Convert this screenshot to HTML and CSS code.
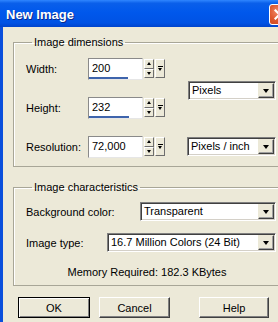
FILE: index.html
```html
<!DOCTYPE html>
<html lang="en">
<head>
    <meta charset="UTF-8">
    <title>New Image</title>
    <link rel="stylesheet" href="styles.css">
</head>
<body>
<div class="window">
  <div class="titlebar">
    <span class="title">New Image</span>
    <span class="close">
      <svg width="11" height="11" viewBox="0 0 11 11"><path d="M1.5 1.5 L9.5 9.5 M9.5 1.5 L1.5 9.5" stroke="#fff" stroke-width="2.2" stroke-linecap="square"/></svg>
    </span>
  </div>
  <div class="client">
    <fieldset class="group dims">
      <legend>Image dimensions</legend>
      <div class="dim-grid">
        <span class="lbl">Width:</span>
        <div class="spin">
          <div class="field"><span>200</span><i class="bar" style="width:39px"></i></div>
          <div class="spin-btns"><span class="sb"><b class="up"></b></span><span class="sb"><b class="down"></b></span></div>
          <div class="jump"><i class="line"></i><b class="down"></b></div>
        </div>
        <div class="select units">
          <span class="val">Pixels</span><span class="arrow"><b class="down"></b></span>
        </div>

        <span class="lbl">Height:</span>
        <div class="spin">
          <div class="field"><span>232</span><i class="bar" style="width:40px"></i></div>
          <div class="spin-btns"><span class="sb"><b class="up"></b></span><span class="sb"><b class="down"></b></span></div>
          <div class="jump"><i class="line"></i><b class="down"></b></div>
        </div>

        <span class="lbl">Resolution:</span>
        <div class="spin">
          <div class="field"><span>72,000</span></div>
          <div class="spin-btns"><span class="sb"><b class="up"></b></span><span class="sb"><b class="down"></b></span></div>
          <div class="jump"><i class="line"></i><b class="down"></b></div>
        </div>
        <div class="select res-units">
          <span class="val">Pixels / inch</span><span class="arrow"><b class="down"></b></span>
        </div>
      </div>
    </fieldset>

    <fieldset class="group chars">
      <legend>Image characteristics</legend>
      <div class="row">
        <span class="lbl">Background color:</span>
        <div class="select bg"><span class="val">Transparent</span><span class="arrow"><b class="down"></b></span></div>
      </div>
      <div class="row">
        <span class="lbl">Image type:</span>
        <div class="select type"><span class="val">16.7 Million Colors (24 Bit)</span><span class="arrow"><b class="down"></b></span></div>
      </div>
      <p class="memory">Memory Required: 182.3 KBytes</p>
    </fieldset>

    <div class="buttons">
      <button class="btn default">OK</button>
      <button class="btn cancel">Cancel</button>
      <button class="btn help">Help</button>
    </div>
  </div>
</div>
</body>
</html>
```
FILE: styles.css
```css
html, body {
    margin: 0;
    padding: 0;
    overflow: hidden;
    background-color: #ece9d8;
}
body {
    width: 278px;
    height: 322px;
    font-family: "Liberation Sans", Arial, sans-serif;
    font-size: 11px;
    color: #000;
}
.window {
    width: 293px;
    height: 322px;
    background-color: #ece9d8;
    border-left: 3px solid #0a4fdc;
    box-sizing: border-box;
}
.titlebar {
    height: 27px;
    margin-left: -3px;
    padding: 0 3px 0 6px;
    display: flex;
    align-items: center;
    justify-content: space-between;
    background: linear-gradient(#2f86ff 0%, #0a5fea 12%, #0058ec 45%, #0052e4 85%, #0044cc 100%);
}
.title {
    color: #fff;
    font-weight: bold;
    font-size: 13px;
    text-shadow: 1px 1px 0 #0a2a8a;
    padding-top: 1px;
}
.close {
    width: 19px;
    height: 19px;
    margin-top: 2px;
    border: 1px solid #fff;
    border-radius: 3px;
    background: radial-gradient(circle at 40% 35%, #f08a6a 0%, #e05a32 45%, #c8401a 100%);
    display: flex;
    align-items: center;
    justify-content: center;
}
.client {
    padding: 9px 8px 0 10px;
}

/* group boxes */
.group {
    margin: 0;
    border: 1px solid #a8a697;
    box-shadow: inset 1px 1px 0 #fff;
    padding: 10px 8px 9px 12px;
}
.group legend {
    padding: 0 2px;
    margin-left: 6px;
    line-height: 12px;
}
.chars {
    margin-top: 14px;
    padding: 9px 8px 6px 12px;
}

.dim-grid {
    display: grid;
    grid-template-columns: 62px 77px 1fr;
    grid-template-rows: 21px 21px 21px;
    row-gap: 18px;
    align-items: center;
}
.lbl {
    white-space: nowrap;
}
.units {
    grid-column: 3;
    grid-row: 1 / span 2;
    justify-self: end;
    width: 88px;
    margin-top: 5px;
}
.res-units {
    grid-column: 3;
    justify-self: end;
    width: 89px;
}

/* spin control */
.spin {
    display: flex;
    height: 21px;
    gap: 1px;
}
.field {
    position: relative;
    width: 56px;
    height: 22px;
    box-sizing: border-box;
    background: #fff;
    border: 1px solid;
    border-color: #8a8a8a #e6e6e6 #e6e6e6 #8a8a8a;
    padding: 3px 0 0 3px;
    line-height: 13px;
}
.bar {
    position: absolute;
    left: 0;
    bottom: 0;
    height: 2px;
    background: #3e64ac;
}
.spin-btns {
    display: flex;
    flex-direction: column;
    width: 10px;
    height: 19px;
    margin-top: 1px;
}
.sb, .jump, .arrow {
    display: flex;
    align-items: center;
    justify-content: center;
    background: #ece9d8;
    box-sizing: border-box;
    border: 1px solid;
    border-color: #fff #6e6e6e #6e6e6e #fff;
}
.sb {
    flex: 1;
}
.jump {
    width: 10px;
    height: 19px;
    margin-top: 1px;
    flex-direction: column;
    gap: 1px;
}
.jump .line {
    width: 5px;
    height: 1px;
    background: #000;
}
b.up, b.down {
    width: 0;
    height: 0;
    border-left: 2.5px solid transparent;
    border-right: 2.5px solid transparent;
}
b.up {
    border-bottom: 3px solid #000;
}
b.down {
    border-top: 3px solid #000;
}

/* drop-down lists */
.select {
    display: flex;
    height: 19px;
    box-sizing: border-box;
    background: #fff;
    border: 1px solid;
    border-color: #808080 #fff #fff #808080;
    box-shadow: inset 1px 1px 0 #404040, inset -1px -1px 0 #d4d0c8;
    padding: 1px;
}
.select .val {
    flex: 1;
    padding-left: 2px;
    line-height: 15px;
    white-space: nowrap;
    overflow: hidden;
}
.arrow {
    width: 16px;
    box-shadow: inset -1px -1px 0 #a0a0a0;
    border-color: #ece9d8 #404040 #404040 #ece9d8;
}
.arrow b.down {
    border-left-width: 3.5px;
    border-right-width: 3.5px;
    border-top-width: 4px;
}

.row {
    display: flex;
    align-items: center;
    justify-content: space-between;
    margin-bottom: 12px;
}
.bg {
    width: 136px;
}
.type {
    width: 169px;
}
.memory {
    margin: 14px 0 0 0;
    text-align: center;
    line-height: 13px;
    padding-right: 8px;
}

/* buttons */
.buttons {
    display: flex;
    margin: 11px 0 0 5px;
}
.btn {
    width: 72px;
    height: 21px;
    padding: 0;
    font-family: "Liberation Sans", Arial, sans-serif;
    font-size: 11px;
    color: #000;
    background: #ece9d8;
    border: 1px solid;
    border-color: #fff #404040 #404040 #fff;
    box-shadow: inset -1px -1px 0 #808080;
}
.default {
    border-color: #000;
    box-shadow: inset 1px 1px 0 #fff, inset -1px -1px 0 #808080;
}
.cancel {
    width: 71px;
    margin-left: 9px;
}
.help {
    width: 70px;
    margin-left: 29px;
}
```
